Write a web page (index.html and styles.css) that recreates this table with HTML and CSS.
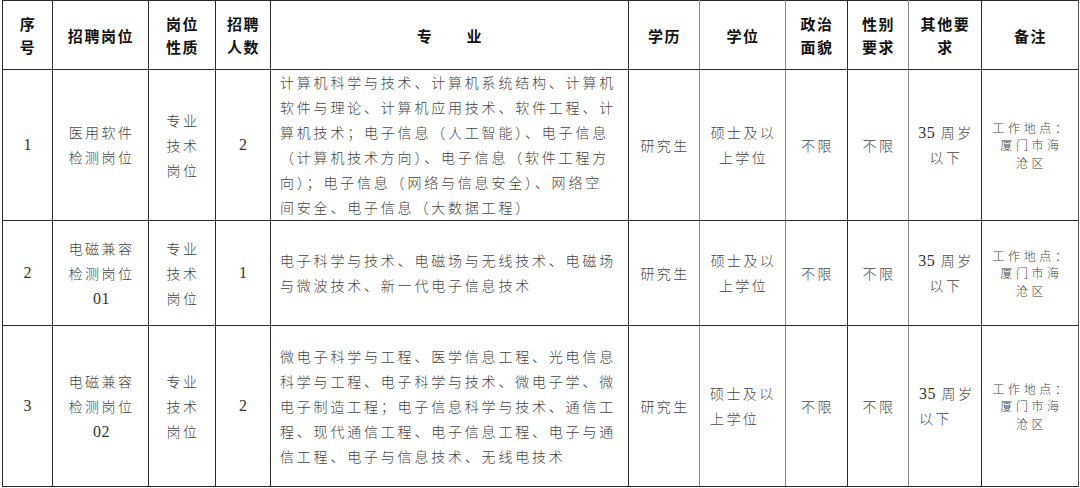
FILE: index.html
```html
<!DOCTYPE html>
<html lang="zh-CN">
<head>
<meta charset="utf-8">
<title>招聘岗位</title>
<link rel="stylesheet" href="styles.css">
</head>
<body>
<table class="jobs">
  <colgroup>
    <col class="c-no"><col class="c-post"><col class="c-type"><col class="c-num"><col class="c-major"><col class="c-edu"><col class="c-deg"><col class="c-pol"><col class="c-sex"><col class="c-other"><col class="c-note">
  </colgroup>
  <thead>
    <tr class="head">
      <th>序<br>号</th>
      <th>招聘岗位</th>
      <th>岗位<br>性质</th>
      <th>招聘<br>人数</th>
      <th>专　　业</th>
      <th>学历</th>
      <th>学位</th>
      <th>政治<br>面貌</th>
      <th>性别<br>要求</th>
      <th>其他要<br>求</th>
      <th>备注</th>
    </tr>
  </thead>
  <tbody>
    <tr class="r1">
      <td class="num">1</td>
      <td class="sp">医用软件<br>检测岗位</td>
      <td class="sp">专业<br>技术<br>岗位</td>
      <td class="num">2</td>
      <td class="major">计算机科学与技术、计算机系统结构、计算机<br>软件与理论、计算机应用技术、软件工程、计<br>算机技术；电子信息（人工智能）、电子信息<br>（计算机技术方向）、电子信息（软件工程方<br>向）；电子信息（网络与信息安全）、网络空<br>间安全、电子信息（大数据工程）</td>
      <td class="sp">研究生</td>
      <td class="sp">硕士及以<br>上学位</td>
      <td class="sp">不限</td>
      <td class="sp">不限</td>
      <td class="sp"><span class="digits">35</span> 周岁<br>以下</td>
      <td class="note"><span class="nl">工作地点：</span><span class="nl">厦门市海</span><span class="nl">沧区</span></td>
    </tr>
    <tr class="r2">
      <td class="num">2</td>
      <td class="sp">电磁兼容<br>检测岗位<br><span class="digits">01</span></td>
      <td class="sp">专业<br>技术<br>岗位</td>
      <td class="num">1</td>
      <td class="major">电子科学与技术、电磁场与无线技术、电磁场<br>与微波技术、新一代电子信息技术</td>
      <td class="sp">研究生</td>
      <td class="sp">硕士及以<br>上学位</td>
      <td class="sp">不限</td>
      <td class="sp">不限</td>
      <td class="sp"><span class="digits">35</span> 周岁<br>以下</td>
      <td class="note"><span class="nl">工作地点：</span><span class="nl">厦门市海</span><span class="nl">沧区</span></td>
    </tr>
    <tr class="r3">
      <td class="num">3</td>
      <td class="sp">电磁兼容<br>检测岗位<br><span class="digits">02</span></td>
      <td class="sp">专业<br>技术<br>岗位</td>
      <td class="num">2</td>
      <td class="major">微电子科学与工程、医学信息工程、光电信息<br>科学与工程、电子科学与技术、微电子学、微<br>电子制造工程；电子信息科学与技术、通信工<br>程、现代通信工程、电子信息工程、电子与通<br>信工程、电子与信息技术、无线电技术</td>
      <td class="sp">研究生</td>
      <td class="sp left">硕士及以<br>上学位</td>
      <td class="sp">不限</td>
      <td class="sp">不限</td>
      <td class="sp left"><span class="digits">35</span> 周岁<br>以下</td>
      <td class="note"><span class="nl">工作地点：</span><span class="nl">厦门市海</span><span class="nl">沧区</span></td>
    </tr>
  </tbody>
</table>
</body>
</html>
```

FILE: styles.css
```css
html, body {
  margin: 0;
  padding: 0;
  background: #ffffff;
}

body {
  font-family: "Noto Sans CJK SC", "Noto Sans", sans-serif;
  color: #444444;
}

.jobs {
  margin: 0 0 0 2px;
  border-collapse: collapse;
  table-layout: fixed;
  width: 1076px;
}

.c-no { width: 50px; }
.c-post { width: 96px; }
.c-type { width: 67px; }
.c-num { width: 55px; }
.c-major { width: 358px; }
.c-edu { width: 71px; }
.c-deg { width: 86px; }
.c-pol { width: 62px; }
.c-sex { width: 61px; }
.c-other { width: 73px; }
.c-note { width: 97px; }

.jobs th,
.jobs td {
  border: 1px solid #2a2a2a;
  padding: 0 2px;
  text-align: center;
  vertical-align: middle;
  white-space: nowrap;
  overflow: hidden;
}

.jobs th:nth-child(6),
.jobs td:nth-child(6),
.jobs th:nth-child(7),
.jobs td:nth-child(7),
.jobs th:nth-child(9),
.jobs td:nth-child(9) {
  border-right-color: #8a8a8a;
}

.jobs th:nth-child(11),
.jobs td:nth-child(11) {
  border-right-color: #555555;
}

.jobs tbody tr > * {
  border-top-color: #4a4a4a;
}

.head {
  height: 69px;
}

.head th {
  font-size: 15px;
  font-weight: 700;
  color: #111111;
  line-height: 23px;
  letter-spacing: 1.6px;
  padding-left: 3px;
}

.r1 { height: 151px; }
.r2 { height: 105px; }
.r3 { height: 161px; }

.sp {
  font-size: 14px;
  font-weight: 300;
  line-height: 25px;
  letter-spacing: 2.4px;
}

.jobs td.sp {
  padding-left: 4px;
}

.jobs td.left {
  text-align: left;
  padding-left: 10px;
}

.num {
  font-family: "Liberation Serif", "DejaVu Serif", serif;
  font-size: 16px;
  color: #333333;
}

.digits {
  font-family: "Liberation Serif", "DejaVu Serif", serif;
  font-size: 16px;
  letter-spacing: 0.5px;
  color: #333333;
}

.jobs td.major {
  text-align: left;
  padding-left: 9px;
  font-size: 14px;
  font-weight: 300;
  line-height: 25px;
  letter-spacing: 2.8px;
}

.jobs td.note {
  font-size: 12px;
  font-weight: 300;
  letter-spacing: 3.6px;
  padding-left: 5px;
}

.nl {
  display: block;
  height: 17.5px;
  line-height: 17.5px;
}
```
